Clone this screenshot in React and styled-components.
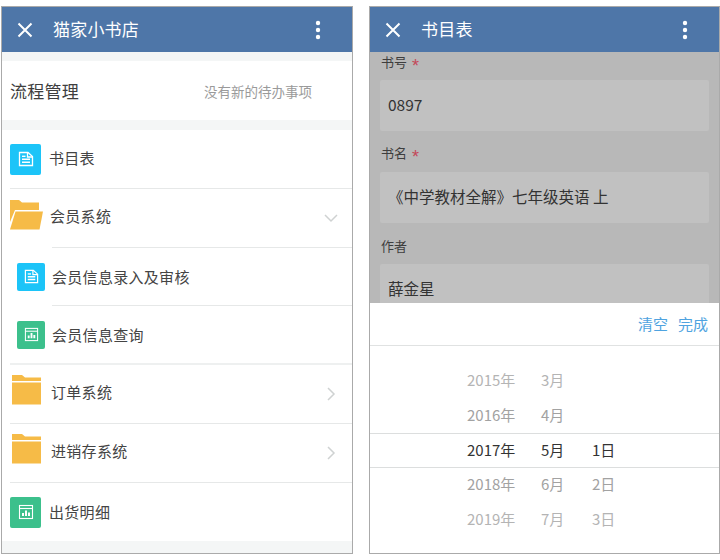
import React from "react";
import styled, { createGlobalStyle } from "styled-components";

const GlobalStyle = createGlobalStyle`
    html, body {
        margin: 0;
        padding: 0;
        background: #fff;
        font-family: "Noto Sans CJK SC", "Noto Sans", sans-serif;
    }
    * { box-sizing: border-box; }
`;

const Page = styled.div`
    display: flex;
    gap: 16px;
    width: 720px;
    height: 560px;
    padding: 6px 0 0 1px;
`;

const Phone = styled.div`
    display: flex;
    flex-direction: column;
    width: ${({ $w }) => $w}px;
    height: 548px;
    border: 1px solid #aaa;
    background: #f4f6f6;
    overflow: hidden;
`;

const Header = styled.div`
    display: flex;
    flex: none;
    align-items: center;
    height: 45px;
    padding: 0 31px 0 14px;
    background: #4e76a8;
    color: #fff;
`;

const Title = styled.div`
    flex: 1;
    margin: 0 0 2px 19px;
    font-size: 17px;
    letter-spacing: 0.2px;
`;

const Flow = styled.div`
    display: flex;
    flex: none;
    align-items: center;
    justify-content: space-between;
    height: 59px;
    margin: 9px 0 10px;
    padding: 0 40px 0 8px;
    background: #fff;
`;

const FlowTitle = styled.div`
    font-size: 17px;
    letter-spacing: 0.25px;
    color: #3e3e3e;
`;

const FlowHint = styled.div`
    font-size: 13.5px;
    color: #9a9a9a;
`;

const List = styled.div`
    flex: none;
    background: #fff;
`;

const Row = styled.div`
    display: flex;
    align-items: center;
    height: ${({ $h }) => $h || 58}px;
    padding-left: ${({ $sub }) => ($sub ? 15 : 8)}px;
    padding-right: 14px;
`;

const Label = styled.div`
    flex: 1;
    margin-left: ${({ $gap }) => $gap}px;
    margin-bottom: ${({ $lift }) => $lift || 0}px;
    font-size: 15px;
    letter-spacing: 0.3px;
    color: #444;
`;

const Divider = styled.div`
    height: ${({ $thick }) => ($thick ? 2 : 1)}px;
    margin-left: ${({ $inset }) => $inset}px;
    background: ${({ $thick }) => ($thick ? "#eef0f0" : "#e6e8e8")};
`;

const Square = styled.div`
    display: flex;
    flex: none;
    align-items: center;
    justify-content: center;
    width: ${({ $size }) => $size}px;
    height: ${({ $size }) => $size}px;
    border-radius: 2px;
    background: ${({ $bg }) => $bg};
`;

const FolderBox = styled.svg`
    flex: none;
    margin-left: ${({ $left }) => $left}px;
    margin-bottom: ${({ $lift }) => $lift}px;
`;

const Form = styled.div`
    flex: 1;
    min-height: 0;
    padding: 2px 10px 0;
    background: #b8b8b8;
    overflow: hidden;
`;

const FieldLabel = styled.div`
    height: 19px;
    margin-top: ${({ $top }) => $top}px;
    margin-bottom: ${({ $bottom }) => $bottom}px;
    margin-left: 1px;
    font-size: 13px;
    line-height: 15px;
    color: #3e3e3e;
`;

const Star = styled.span`
    margin-left: 5px;
    font-family: "Liberation Sans", sans-serif;
    font-size: 18px;
    line-height: 12px;
    vertical-align: -5px;
    color: #c4485a;
`;

const Field = styled.div`
    display: flex;
    align-items: center;
    height: 51px;
    padding: 0 0 4px 8px;
    border-radius: 2px;
    background: #c1c1c1;
    font-size: 15.5px;
    white-space: pre;
    color: #333;
`;

const Sheet = styled.div`
    flex: none;
    height: 250px;
    background: #fff;
`;

const SheetBar = styled.div`
    display: flex;
    justify-content: flex-end;
    align-items: center;
    gap: 10px;
    height: 43px;
    padding: 0 11px 1px 0;
    border-bottom: 1px solid #e0e2e2;
`;

const SheetAction = styled.div`
    font-size: 15px;
    color: #4fa3e0;
`;

const Wheel = styled.div`
    padding-top: 18px;
`;

const WheelRow = styled.div`
    display: grid;
    grid-template-columns: 74px 51px 30px;
    align-items: center;
    height: 34.7px;
    padding: 0 0 3px 97px;
    border-top: ${({ $active }) => ($active ? "1px solid #dcdede" : "none")};
    border-bottom: ${({ $active }) => ($active ? "1px solid #dcdede" : "none")};
    font-size: 15px;
    color: ${({ $active, $far }) => ($active ? "#333" : $far ? "#b4b4b4" : "#a2a2a2")};
`;

const CloseIcon = () => (
    <svg width="18" height="18" viewBox="0 0 18 18" fill="none" stroke="#fff" strokeWidth="2">
        <path d="M2.5 2.5 L15.5 15.5 M15.5 2.5 L2.5 15.5" />
    </svg>
);

const MoreIcon = () => (
    <svg width="6" height="20" viewBox="0 0 6 20" fill="#fff">
        <circle cx="3" cy="3" r="2.2" />
        <circle cx="3" cy="10" r="2.2" />
        <circle cx="3" cy="17" r="2.2" />
    </svg>
);

const DocIcon = ({ size }) => (
    <svg width={size} height={size} viewBox="0 0 16 16" fill="none" stroke="#fff" strokeWidth="1.3">
        <path d="M1.5 1.5 H10 L14.5 5.5 V14.5 H1.5 Z" />
        <path d="M9.5 1.5 V6 H14.5" />
        <path d="M4 8.3 H12 M4 11.3 H12" strokeWidth="1.6" />
        <path d="M4 5.3 H7.5" strokeWidth="1.4" />
    </svg>
);

const ChartIcon = ({ size }) => (
    <svg width={size} height={size} viewBox="0 0 16 16" fill="none" stroke="#fff" strokeWidth="1.1">
        <rect x="1.5" y="1.5" width="13" height="13" />
        <path d="M1.5 4.5 H14.5" />
        <path d="M5 12 V9 M8 12 V6.5 M11 12 V8.5" strokeWidth="2" />
    </svg>
);

const Folder = () => (
    <FolderBox $left={2} $lift={9} width="30" height="30" viewBox="0 0 30 30">
        <path d="M0 0 H10 L13 2.5 H29 V6 H0 Z" fill="#f6bb47" />
        <rect x="0" y="7.5" width="29" height="22" fill="#f6bb47" />
    </FolderBox>
);

const OpenFolder = () => (
    <FolderBox $left={0} $lift={7} width="33" height="30" viewBox="0 0 33 30">
        <path d="M0 0 H9 L12 2.5 H29 V10 H5 L0 22 Z" fill="#f6bb47" />
        <path d="M5.5 11.5 H33 L29.5 29.5 H0 Z" fill="#f6bb47" />
    </FolderBox>
);

const Chevron = ({ open }) => (
    <svg width="14" height="14" viewBox="0 0 14 14" fill="none" stroke="#cfd2d2" strokeWidth="1.5">
        <path d={open ? "M1 4 L7 10 L13 4" : "M4 1 L10 7 L4 13"} />
    </svg>
);

const wheelRows = [
    { y: "2015年", m: "3月", d: "", far: true },
    { y: "2016年", m: "4月", d: "" },
    { y: "2017年", m: "5月", d: "1日", active: true },
    { y: "2018年", m: "6月", d: "2日" },
    { y: "2019年", m: "7月", d: "3日", far: true },
];

const App = () => {
    return (
        <Page>
            <GlobalStyle />
            <Phone $w={352}>
                <Header>
                    <CloseIcon />
                    <Title>猫家小书店</Title>
                    <MoreIcon />
                </Header>
                <Flow>
                    <FlowTitle>流程管理</FlowTitle>
                    <FlowHint>没有新的待办事项</FlowHint>
                </Flow>
                <List>
                    <Row>
                        <Square $size={31} $bg="#1cc4f8"><DocIcon size={16} /></Square>
                        <Label $gap={8} $lift={4}>书目表</Label>
                    </Row>
                    <Divider $inset={8} />
                    <Row>
                        <OpenFolder />
                        <Label $gap={7} $lift={5}>会员系统</Label>
                        <Chevron open />
                    </Row>
                    <Divider $inset={50} />
                    <Row $sub $h={57}>
                        <Square $size={28} $bg="#1cc4f8"><DocIcon size={15} /></Square>
                        <Label $gap={7}>会员信息录入及审核</Label>
                    </Row>
                    <Divider $inset={50} />
                    <Row $sub $h={57}>
                        <Square $size={28} $bg="#3cc08c"><ChartIcon size={15} /></Square>
                        <Label $gap={7}>会员信息查询</Label>
                    </Row>
                    <Divider $inset={8} $thick />
                    <Row>
                        <Folder />
                        <Label $gap={9} $lift={5}>订单系统</Label>
                        <Chevron />
                    </Row>
                    <Divider $inset={8} />
                    <Row>
                        <Folder />
                        <Label $gap={9} $lift={5}>进销存系统</Label>
                        <Chevron />
                    </Row>
                    <Divider $inset={8} />
                    <Row>
                        <Square $size={31} $bg="#3cc08c"><ChartIcon size={16} /></Square>
                        <Label $gap={8} $lift={2}>出货明细</Label>
                    </Row>
                </List>
            </Phone>
            <Phone $w={351}>
                <Header>
                    <CloseIcon />
                    <Title>书目表</Title>
                    <MoreIcon />
                </Header>
                <Form>
                    <FieldLabel $top={0} $bottom={7}>书号<Star>*</Star></FieldLabel>
                    <Field>0897</Field>
                    <FieldLabel $top={14} $bottom={8}>书名<Star>*</Star></FieldLabel>
                    <Field>《中学教材全解》七年级英语 上</Field>
                    <FieldLabel $top={15} $bottom={7}>作者</FieldLabel>
                    <Field>薛金星</Field>
                </Form>
                <Sheet>
                    <SheetBar>
                        <SheetAction>清空</SheetAction>
                        <SheetAction>完成</SheetAction>
                    </SheetBar>
                    <Wheel>
                        {wheelRows.map((r) => (
                            <WheelRow key={r.y} $active={r.active} $far={r.far}>
                                <span>{r.y}</span>
                                <span>{r.m}</span>
                                <span>{r.d}</span>
                            </WheelRow>
                        ))}
                    </Wheel>
                </Sheet>
            </Phone>
        </Page>
    );
};

export default App;
